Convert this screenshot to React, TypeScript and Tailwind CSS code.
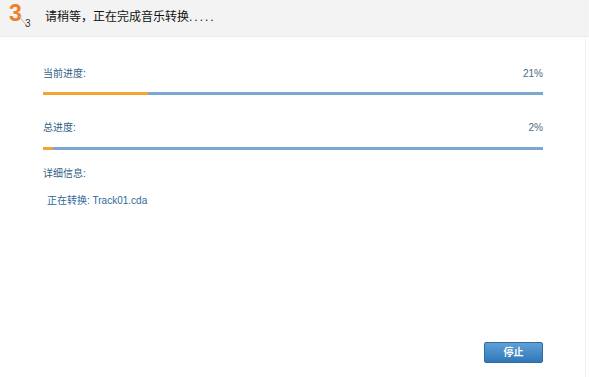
import React from "react";

const font = { fontFamily: '"Liberation Sans", "Noto Sans CJK SC", sans-serif' };

function Bar({ pct }: { pct: number }) {
  return (
    <div className="h-[3px] w-full bg-[#7ba7d3]">
      <div className="h-full bg-[#f0a630]" style={{ width: `${pct}%` }} />
    </div>
  );
}

export default function App() {
  return (
    <div className="w-[589px] h-[377px] bg-white relative overflow-hidden" style={font}>
      <div className="h-[37px] bg-[#f3f3f3] border-b border-[#ececec] flex items-center">
        <div className="relative w-[40px] h-[37px]">
          <span className="absolute left-[9px] top-[2px] text-[23px] font-bold text-[#ee7d2c] leading-none">3</span>
          <svg className="absolute left-[18px] top-[15px]" width="10" height="12" viewBox="0 0 10 12">
            <line x1="1" y1="1" x2="8" y2="10" stroke="#c9b3a0" strokeWidth="1" />
          </svg>
          <span className="absolute left-[25px] top-[19px] text-[10px] text-[#333] leading-none">3</span>
        </div>
        <span className="ml-[5px] mb-[3px] text-[12px] text-[#111]">
          请稍等，正在完成音乐转换<span className="tracking-[2px]">.....</span>
        </span>
      </div>
      <div className="absolute right-[3px] top-[0px] bottom-[0px] w-px bg-[#f0f0f0]" />
      <div className="px-[43px] pt-[32px] pr-[46px] flex flex-col text-[#2f5f86] text-[10px]">
        <div className="flex justify-between leading-none">
          <span>当前进度:</span>
          <span className="text-[#4d6a84]">21%</span>
        </div>
        <div className="mt-[13px]">
          <Bar pct={21} />
        </div>
        <div className="flex justify-between leading-none mt-[28px]">
          <span>总进度:</span>
          <span className="text-[#4d6a84]">2%</span>
        </div>
        <div className="mt-[14px]">
          <Bar pct={2} />
        </div>
        <div className="leading-none mt-[19px]">详细信息:</div>
        <div className="leading-none mt-[17px] ml-[4px] text-[#2d6a9a]">正在转换: Track01.cda</div>
      </div>
      <button
        className="absolute left-[484px] top-[342px] w-[59px] h-[21px] bg-gradient-to-b from-[#5fa0d6] to-[#2f78b8] border border-[#2d6ca3] rounded-[2px] text-white text-[10px] font-bold flex items-center justify-center"
      >
        停止
      </button>
    </div>
  );
}
